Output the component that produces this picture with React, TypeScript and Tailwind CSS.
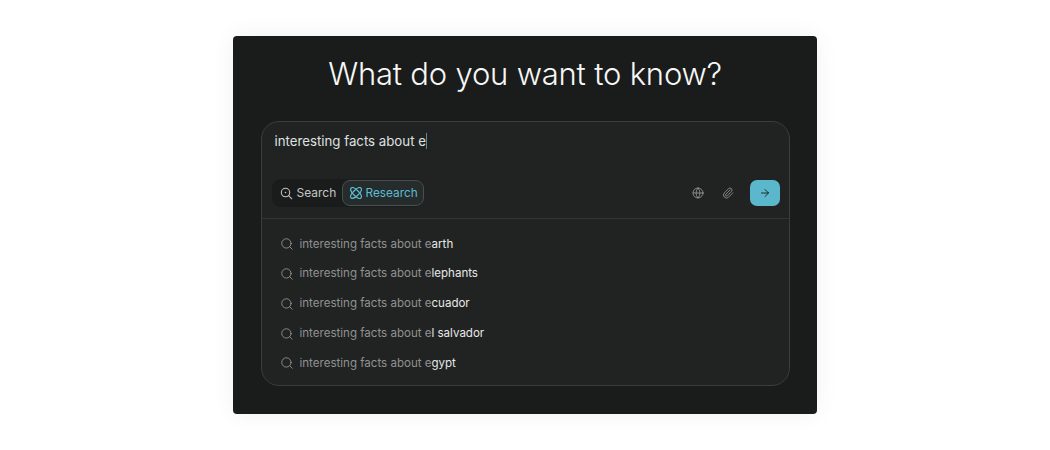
import React from 'react';
import { ArrowRight, Globe, Paperclip, Search } from 'lucide-react';

const suggestions = ['arth', 'lephants', 'cuador', 'l salvador', 'gypt'];

const ResearchIcon = () => (
  <svg viewBox="2 2 12 12" fill="none" stroke="currentColor" strokeWidth="1.2" className="h-[12px] w-[12px]">
    <ellipse cx="8" cy="8" rx="7" ry="2.800" transform="rotate(45 8 8)" />
    <ellipse cx="8" cy="8" rx="7" ry="2.800" transform="rotate(-45 8 8)" />
  </svg>
);

const SearchModeIcon = () => (
  <svg viewBox="0 0 16 16" fill="none" stroke="currentColor" strokeWidth="1.3" strokeLinecap="round" className="h-[13px] w-[13px]">
    <circle cx="6.800" cy="6.800" r="5.200" />
    <path d="M10.700 10.700L14.500 14.500" />
    <circle cx="6.800" cy="6.800" r="1" fill="currentColor" stroke="none" />
  </svg>
);

export default function App() {
  return (
    <div className="flex h-[450px] w-[1050px] justify-center bg-white pt-9 font-['Inter',sans-serif]">
      <div className="flex h-[378px] w-[584px] flex-col items-center rounded-[4px] bg-[#1a1c1b] px-7 pt-[15px] shadow-[0_0_24px_rgba(0,0,0,0.06)]">
        <h1 className="text-[31px] font-light leading-[46px] tracking-[-0.2px] text-[#f6f7f6]">What do you want to know?</h1>
        <div className="mt-[24px] h-[265px] w-[529px] rounded-[18px] border border-[#3a3d3c] bg-[#212322]">
          <div className="h-[97px] border-b border-[#323534] pt-[9px]">
            <div className="flex items-center pl-[13px] text-[13.250px] leading-5 text-[#dfe1e0]">
              interesting facts about e
              <span className="h-[16px] w-px bg-[#5f8a95]" />
            </div>
            <div className="mt-[28px] flex items-center justify-between pl-[10px] pr-[9px]">
              <div className="flex h-[28px] items-center rounded-[9px] bg-[#1a1c1b]">
                <div className="flex w-[70px] items-center gap-[3px] pl-[8px] text-[12px] leading-4 text-[#c4c7c6]">
                  <SearchModeIcon />
                  <span className="ml-px">Search</span>
                </div>
                <div className="flex h-[26px] w-[82px] items-center gap-[4px] rounded-[8px] border border-[#484f51] bg-[#262b2c] pl-[7px] text-[11.800px] leading-4 text-[#5cbdd2]">
                  <ResearchIcon />
                  Research
                </div>
              </div>
              <div className="flex items-center text-[#a3a6a5]">
                <Globe size={12} strokeWidth={1.5} />
                <Paperclip size={12} strokeWidth={1.5} className="ml-[18px]" />
                <button className="ml-[16px] flex h-[26px] w-[30px] items-center justify-center rounded-[7px] bg-[#5bb8cc] text-[#1a1c1b]">
                  <ArrowRight size={12} strokeWidth={1.8} />
                </button>
              </div>
            </div>
          </div>
          <ul className="pt-[10.500px]">
            {suggestions.map((tail) => (
              <li key={tail} className="flex h-[29.750px] items-center gap-[6px] pl-[18px] text-[11.550px] text-[#8f9291]">
                <Search size={14} strokeWidth={1.3} className="text-[#a3a6a5]" />
                <span>
                  interesting facts about e<span className="text-[#e6e8e7]">{tail}</span>
                </span>
              </li>
            ))}
          </ul>
        </div>
      </div>
    </div>
  );
}
